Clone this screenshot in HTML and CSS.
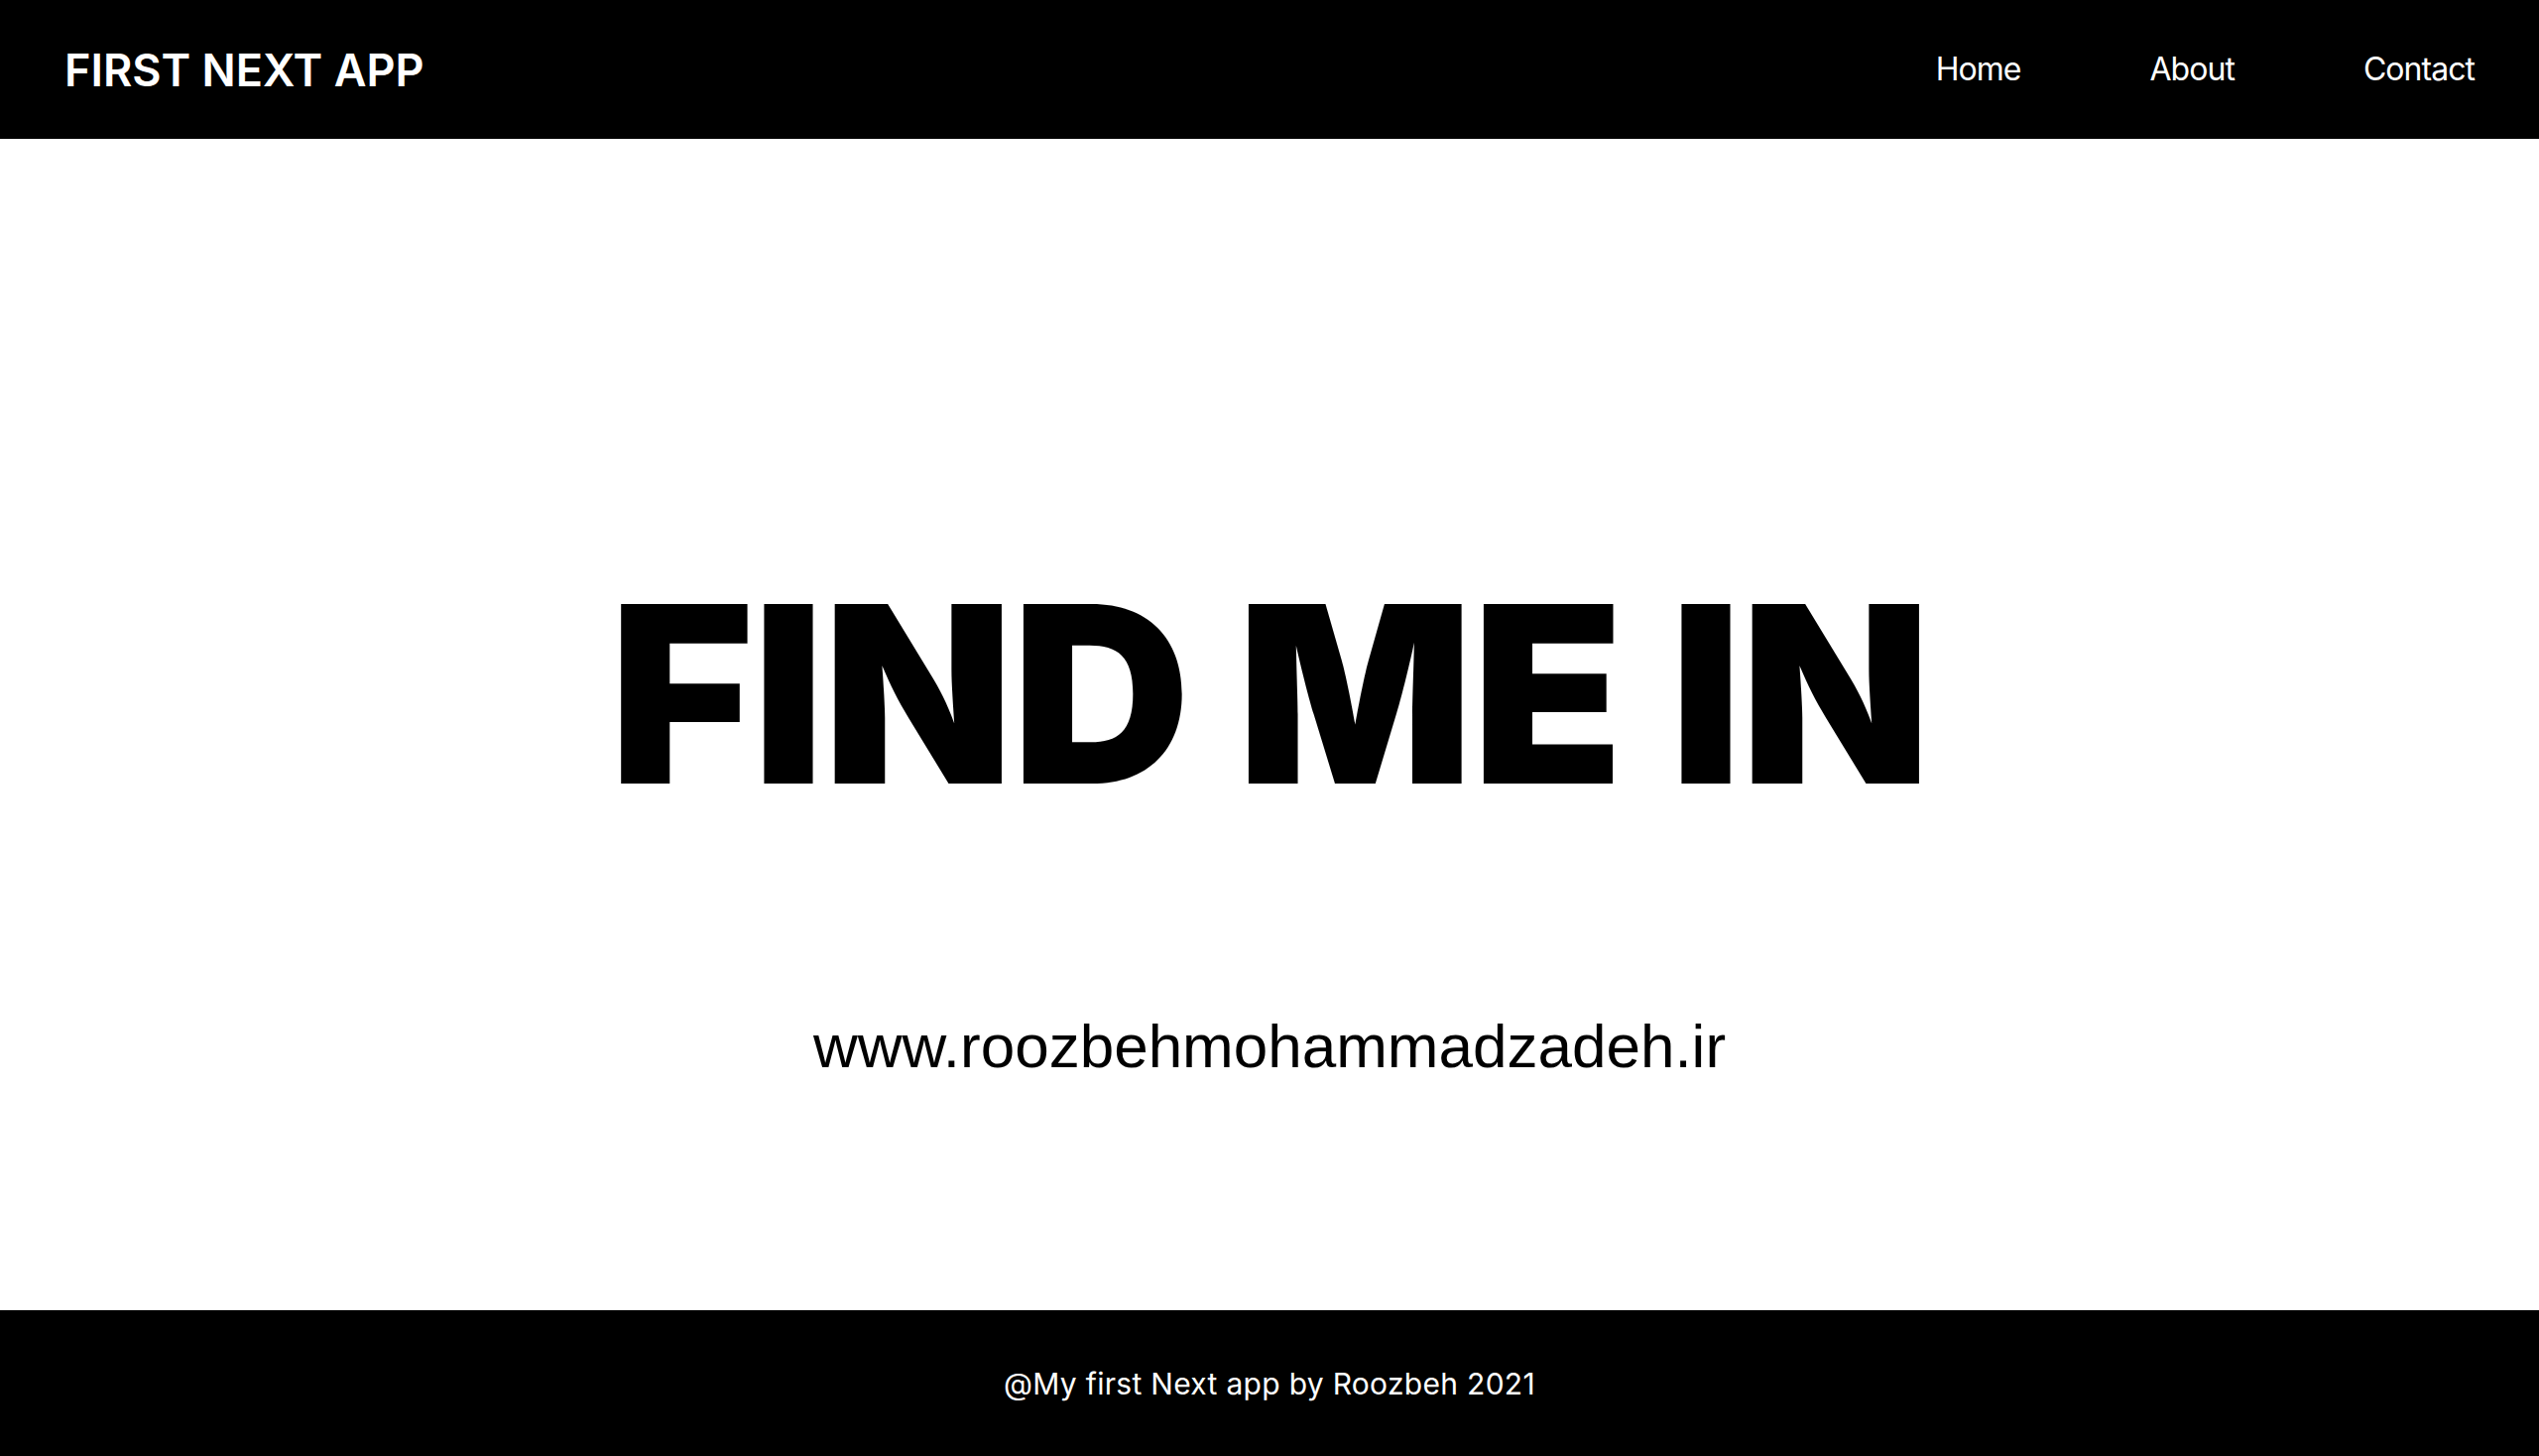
FILE: index.html
```html
<!DOCTYPE html>
<html lang="en">
<head>
<meta charset="utf-8">
<title>First Next App</title>
<link rel="stylesheet" href="styles.css">
</head>
<body>
<div class="page">
  <header class="header">
    <div class="logo">FIRST NEXT APP</div>
    <nav class="nav">
      <a class="nav-link" href="#">Home</a>
      <a class="nav-link" href="#">About</a>
      <a class="nav-link" href="#">Contact</a>
    </nav>
  </header>
  <main class="main">
    <h1 class="title">FIND ME IN</h1>
    <p class="url">www.roozbehmohammadzadeh.ir</p>
  </main>
  <footer class="footer">
    <p class="footer-text">@My first Next app by Roozbeh 2021</p>
  </footer>
</div>
</body>
</html>
```

FILE: styles.css
```css
* { box-sizing: border-box; }
html, body { margin: 0; padding: 0; }
body {
  font-family: Inter, "Noto Sans", "Liberation Sans", sans-serif;
  background: #fff;
  color: #000;
}
.page {
  min-height: 100vh;
  display: flex;
  flex-direction: column;
}
.header {
  height: 140px;
  background: #000;
  color: #fff;
  display: flex;
  align-items: center;
  justify-content: space-between;
  padding: 0 65px 0 65px;
}
.logo {
  font-size: 45px;
  font-weight: 600;
  line-height: 1;
}
.nav {
  display: flex;
  gap: 130px;
}
.nav-link {
  color: #fff;
  text-decoration: none;
  font-size: 32px;
  line-height: 1;
  letter-spacing: -0.03em;
}
.main {
  flex: 1;
  display: flex;
  flex-direction: column;
  align-items: center;
  padding-top: 435px;
}
.title {
  margin: 0;
  font-size: 249px;
  font-weight: 900;
  line-height: 1;
  letter-spacing: -0.005em;
}
.url {
  margin: 200px 0 0;
  font-family: "Liberation Sans", Arial, sans-serif;
  font-size: 62px;
  line-height: 1;
}
.footer {
  height: 147px;
  background: #000;
  color: #fff;
  display: flex;
  align-items: center;
  justify-content: center;
}
.footer-text {
  margin: 0;
  font-size: 30px;
  line-height: 1;
  letter-spacing: 0.01em;
}
```
